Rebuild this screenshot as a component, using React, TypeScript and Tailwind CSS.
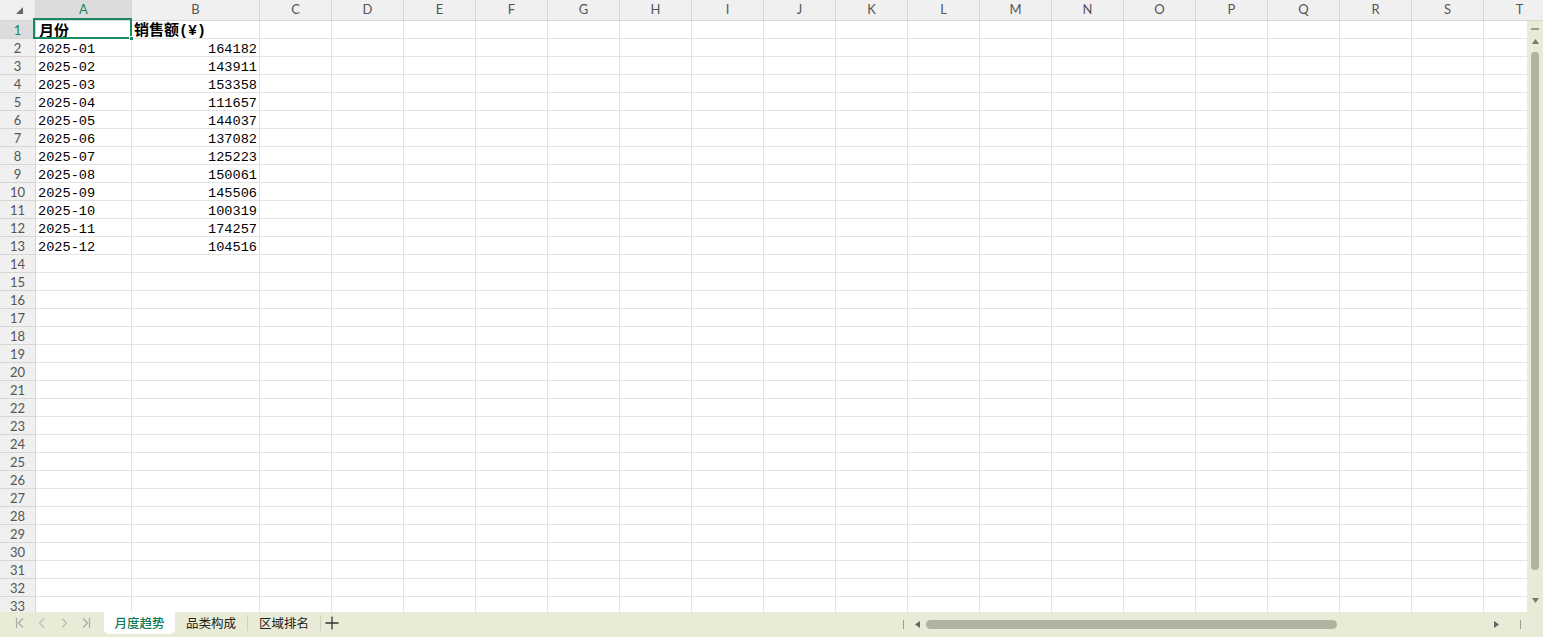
import React from "react";

const cols = [
  { l: "A", w: 96 },
  { l: "B", w: 128 },
  ..."CDEFGHIJKLMNOPQRST".split("").map((l) => ({ l, w: 72 })),
];

const data: [string, string][] = [
  ["2025-01", "164182"],
  ["2025-02", "143911"],
  ["2025-03", "153358"],
  ["2025-04", "111657"],
  ["2025-05", "144037"],
  ["2025-06", "137082"],
  ["2025-07", "125223"],
  ["2025-08", "150061"],
  ["2025-09", "145506"],
  ["2025-10", "100319"],
  ["2025-11", "174257"],
  ["2025-12", "104516"],
];

const cjk = { fontFamily: '"Noto Sans CJK SC", "Noto Sans", sans-serif' };
const mono = { fontFamily: '"Liberation Mono", "Noto Sans CJK SC", monospace' };
const hdr = { fontFamily: 'Lato, "Noto Sans", sans-serif' };

function Cell({ i, children }: { i: number; children?: React.ReactNode }) {
  const w = cols[i].w;
  return (
    <div
      className="h-[18px] shrink-0 border-r border-b border-[#e3e3e3] bg-white flex items-center"
      style={{ width: w }}
    >
      {children}
    </div>
  );
}

export default function App() {
  const rows = Array.from({ length: 33 }, (_, k) => k + 1);
  return (
    <div className="relative w-[1543px] h-[637px] flex flex-col overflow-hidden bg-white select-none">
      {/* column header */}
      <div className="flex h-[21px] shrink-0 overflow-hidden" style={hdr}>
        <div className="w-[36px] shrink-0 h-[21px] bg-[#f0f0f0] border-r border-b border-[#d6d6d6] flex items-end justify-end pr-[12px] pb-[6px]">
          <svg width="7" height="7" viewBox="0 0 7 7">
            <polygon points="7,0 7,7 0,7" fill="#666" />
          </svg>
        </div>
        {cols.map((c, i) => (
          <div
            key={c.l}
            className={`shrink-0 h-[21px] border-r border-b border-[#d6d6d6] flex items-center justify-center text-[13px] ${
              i === 0 ? "bg-[#dcdcdc] text-[#18865e]" : "bg-[#f0f0f0] text-[#555]"
            }`}
            style={{ width: c.w }}
          >
            {c.l}
          </div>
        ))}
      </div>

      {/* body */}
      <div className="flex flex-1 min-h-0">
        <div className="flex-1 min-w-0 overflow-hidden">
          {rows.map((r) => (
            <div key={r} className="flex h-[18px]">
              <div
                className={`w-[36px] shrink-0 h-[18px] border-r border-b border-[#d6d6d6] flex items-center justify-center text-[13px] leading-[16px] ${
                  r === 1 ? "bg-[#dcdcdc] text-[#18865e]" : "bg-[#f0f0f0] text-[#555]"
                }`}
                style={hdr}
              >
                {r}
              </div>
              {cols.map((c, i) => {
                let content: React.ReactNode = null;
                if (r === 1 && i === 0)
                  content = (
                    <span className="pl-[3px] text-[15px] font-bold text-black leading-[17px] whitespace-nowrap" style={cjk}>
                      月份
                    </span>
                  );
                if (r === 1 && i === 1)
                  content = (
                    <span className="pl-[2px] text-[15px] font-bold text-black leading-[17px] whitespace-nowrap" style={cjk}>
                      销售额<span style={mono}>(¥)</span>
                    </span>
                  );
                if (r >= 2 && r <= 13 && i === 0)
                  content = (
                    <span className="pl-[2px] text-[13.6px] text-black leading-[17px] translate-y-[2px] whitespace-nowrap" style={mono}>
                      {data[r - 2][0]}
                    </span>
                  );
                if (r >= 2 && r <= 13 && i === 1)
                  content = (
                    <span className="ml-auto pr-[2px] text-[13.6px] text-black leading-[17px] translate-y-[2px] whitespace-nowrap" style={mono}>
                      {data[r - 2][1]}
                    </span>
                  );
                return (
                  <Cell key={c.l} i={i}>
                    {content}
                  </Cell>
                );
              })}
            </div>
          ))}
        </div>
        {/* vertical scrollbar */}
        <div className="w-[16px] shrink-0 bg-[#e8ebd6] flex flex-col items-center">
          <div className="mt-[7px] w-[8px] h-[1.5px] bg-[#9a9c90]" />
          <svg className="mt-[9px]" width="7" height="5" viewBox="0 0 7 5">
            <polygon points="3.5,0 7,5 0,5" fill="#777" />
          </svg>
          <div className="mt-[8px] w-[8px] h-[518px] rounded-full bg-[#b1b3a1]" />
          <div className="flex-1" />
          <svg className="mb-[9px]" width="7" height="5" viewBox="0 0 7 5">
            <polygon points="0,0 7,0 3.5,5" fill="#777" />
          </svg>
        </div>
      </div>

      {/* tab bar */}
      <div className="h-[25px] shrink-0 bg-[#e8ebd6] flex items-start" style={cjk}>
        <div className="flex items-center h-[22px] pl-[15px] gap-[12px]">
          <svg width="10" height="12" viewBox="0 0 10 12" fill="none" stroke="#aaa" strokeWidth="1.2">
            <path d="M1.5 1v10M8 1.5L3.5 6 8 10.5" />
          </svg>
          <svg width="10" height="12" viewBox="0 0 10 12" fill="none" stroke="#bbb" strokeWidth="1.2">
            <path d="M7 1.5L2.5 6 7 10.5" />
          </svg>
          <svg width="10" height="12" viewBox="0 0 10 12" fill="none" stroke="#bbb" strokeWidth="1.2">
            <path d="M3 1.5L7.5 6 3 10.5" />
          </svg>
          <svg width="10" height="12" viewBox="0 0 10 12" fill="none" stroke="#aaa" strokeWidth="1.2">
            <path d="M2 1.5L6.5 6 2 10.5M8.5 1v10" />
          </svg>
        </div>
        <div className="ml-[13px] w-[71px] h-[22px] bg-white rounded-b-[5px] flex items-center justify-center text-[12.5px] font-medium text-[#0e7d55]">
          月度趋势
        </div>
        <div className="w-[72px] h-[22px] flex items-center justify-center text-[12.5px] text-[#222]">品类构成</div>
        <div className="mt-[3px] w-px h-[16px] bg-[#cfd1bf]" />
        <div className="w-[72px] h-[22px] flex items-center justify-center text-[12.5px] text-[#222]">区域排名</div>
        <div className="mt-[3px] w-px h-[16px] bg-[#cfd1bf]" />
        <div className="ml-[4px] h-[22px] flex items-center">
          <svg width="14" height="14" viewBox="0 0 14 14" stroke="#333" strokeWidth="1.3">
            <path d="M7 0.5v13M0.5 7h13" />
          </svg>
        </div>
        <div className="flex-1" />
        <div className="h-[25px] flex items-center pb-[1px]">
          <div className="w-px h-[9px] bg-[#999]" />
          <svg className="ml-[11px]" width="5" height="7" viewBox="0 0 5 7">
            <polygon points="5,0 5,7 0,3.5" fill="#666" />
          </svg>
          <div className="ml-[6px] w-[411px] h-[9px] rounded-full bg-[#b1b3a1]" />
          <div className="w-[157px]" />
          <svg width="5" height="7" viewBox="0 0 5 7">
            <polygon points="0,0 5,3.5 0,7" fill="#666" />
          </svg>
          <div className="ml-[21px] w-px h-[9px] bg-[#999]" />
          <div className="w-[22px]" />
        </div>
      </div>

      {/* selection overlay */}
      <div className="absolute left-[33px] top-[18px] w-[99px] h-[21px] border-2 border-[#1a8a60] pointer-events-none">
        <div className="absolute right-[-4px] bottom-[-4px] w-[5px] h-[5px] bg-[#1a8a60] border border-white" />
      </div>
    </div>
  );
}
